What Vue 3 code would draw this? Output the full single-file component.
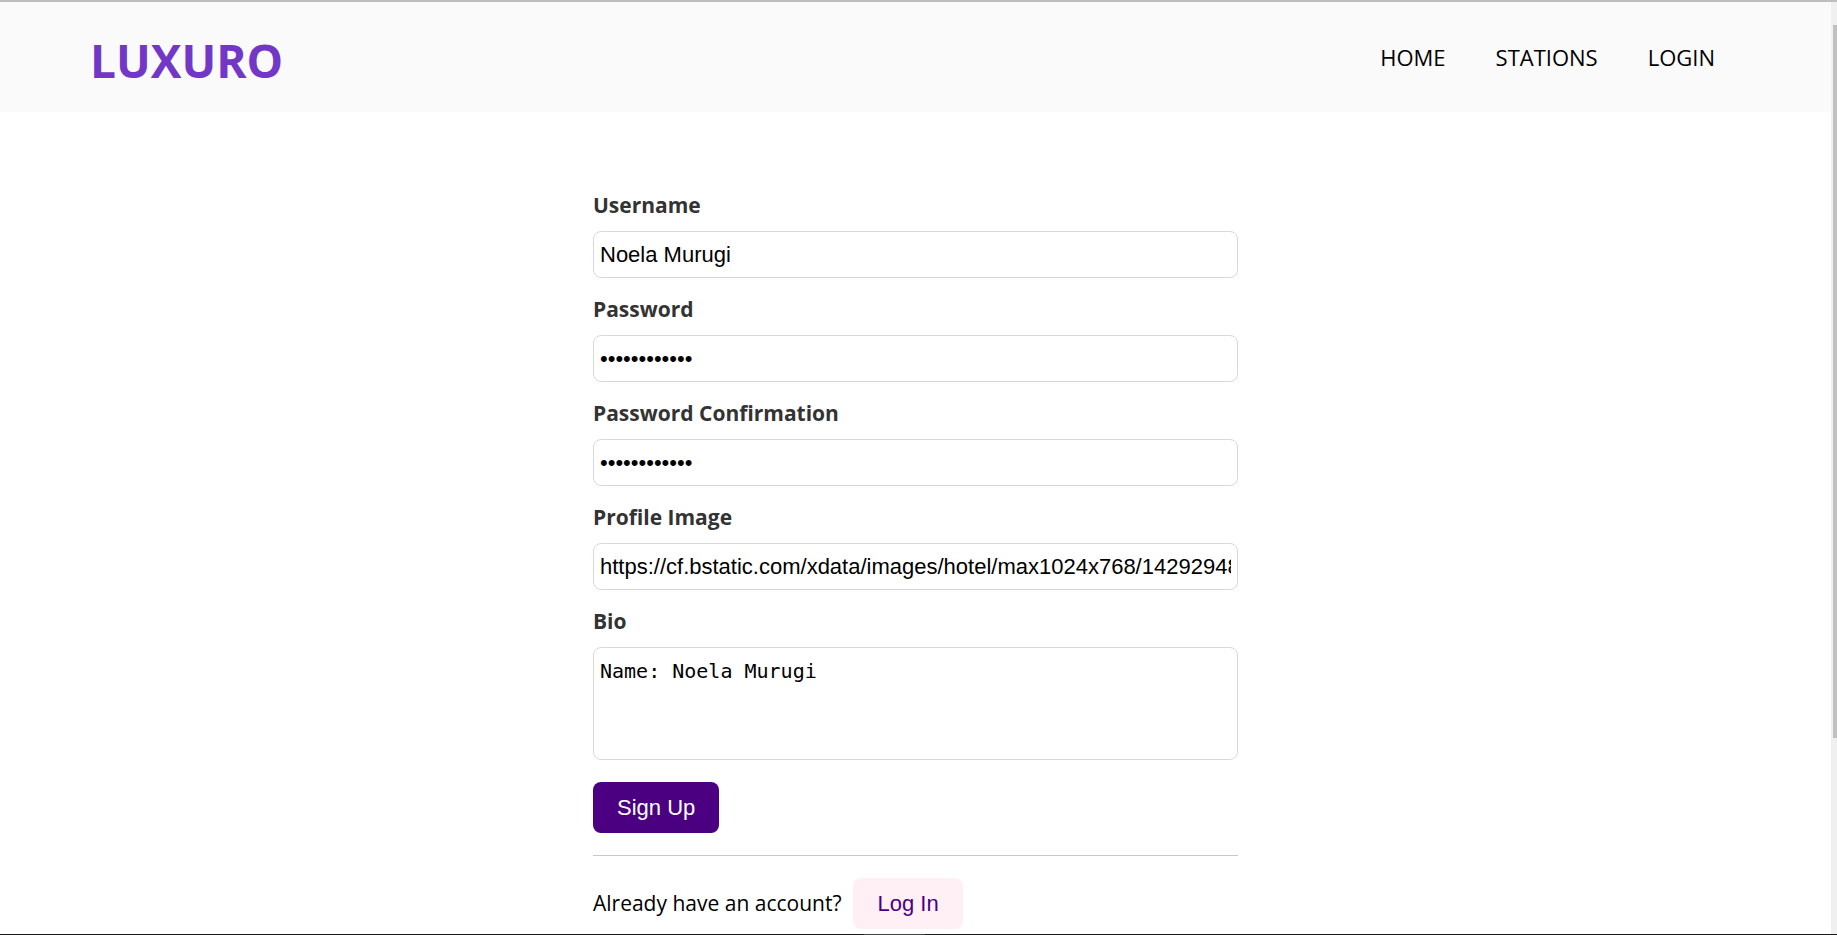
<script setup>
import { ref } from 'vue'

const links = ['HOME', 'STATIONS', 'LOGIN']
const fields = ref([
  { id: 'username', label: 'Username', type: 'text', value: 'Noela Murugi' },
  { id: 'password', label: 'Password', type: 'password', value: 'noelamurugi1' },
  { id: 'confirmation', label: 'Password Confirmation', type: 'password', value: 'noelamurugi1' },
  {
    id: 'image',
    label: 'Profile Image',
    type: 'text',
    value: 'https://cf.bstatic.com/xdata/images/hotel/max1024x768/142929488.jpg',
  },
])
const bio = ref('Name: Noela Murugi')
</script>

<template>
  <div class="screen">
    <div class="page">
      <header class="header">
        <h1 class="logo">LUXURO</h1>
        <nav class="nav">
          <a v-for="link in links" :key="link" href="#">{{ link }}</a>
        </nav>
      </header>
      <main class="main">
        <form class="form" @submit.prevent>
          <div v-for="f in fields" :key="f.id" class="field">
            <label :for="f.id">{{ f.label }}</label>
            <input :id="f.id" v-model="f.value" :type="f.type" autocomplete="off" spellcheck="false" />
          </div>
          <div class="field">
            <label for="bio">Bio</label>
            <textarea id="bio" v-model="bio" spellcheck="false"></textarea>
          </div>
          <button class="btn primary" type="submit">Sign Up</button>
          <hr class="divider" />
          <p class="login">
            <span>Already have an account?</span>
            <button class="btn secondary" type="button">Log In</button>
          </p>
        </form>
      </main>
    </div>
    <div class="track"><div class="thumb"></div></div>
    <div class="taskbar"><div class="active"></div></div>
  </div>
</template>

<style>
body {
  margin: 0;
  background: #fff;
}
</style>

<style scoped>
.screen {
  box-sizing: border-box;
  height: 100vh;
  display: grid;
  grid-template-columns: 1fr 6px;
  grid-template-rows: 1fr 1px;
  border-top: 2px solid #bebebe;
  overflow: hidden;
  font-family: "Open Sans", "Noto Sans", sans-serif;
  font-size: 21px;
  line-height: 32px;
  color: #000;
}
.page {
  min-height: 0;
  overflow: hidden;
}
.header {
  display: flex;
  align-items: center;
  justify-content: space-between;
  padding: 23px 116px 23px 90px;
  background: #fafafa;
}
.logo {
  margin: 0;
  padding-top: 6px;
  font-size: 46px;
  line-height: 58px;
  font-weight: 700;
  color: #7337c8;
}
.nav {
  display: flex;
  gap: 50px;
  font-size: 22px;
}
.nav a {
  color: #000;
  text-decoration: none;
}
.main {
  padding: 77px 24px 0;
}
.form {
  max-width: 645px;
  margin: 0 auto;
}
.field {
  display: flex;
  flex-direction: column;
  gap: 10px;
  margin-bottom: 15px;
}
label {
  font-weight: 700;
  color: #333;
}
input,
textarea {
  box-sizing: border-box;
  width: 100%;
  border: 1px solid #d9d9d9;
  border-radius: 8px;
  background: #fff;
  color: #000;
  outline: none;
}
input {
  height: 47px;
  padding: 6px;
  font-family: "Liberation Sans", Arial, sans-serif;
  font-size: 22px;
}
textarea {
  height: 113px;
  padding: 10px 6px;
  font-family: "DejaVu Sans Mono", monospace;
  font-size: 20px;
  line-height: 26px;
  resize: none;
}
.btn {
  height: 51px;
  padding: 0 24px;
  border: 0;
  border-radius: 8px;
  font-family: "Liberation Sans", Arial, sans-serif;
  font-size: 22px;
}
.primary {
  display: block;
  margin-top: 22px;
  background: #4b0082;
  color: #fff;
}
.secondary {
  background: #fff0f5;
  color: #4b0082;
}
.divider {
  height: 1px;
  margin: 22px 0;
  border: 0;
  background: #c8c8c8;
}
.login {
  display: flex;
  align-items: baseline;
  gap: 12px;
  margin: 0;
}
.track {
  display: flex;
  padding: 23px 0 0 2px;
  background: #f0f0f0;
}
.thumb {
  width: 100%;
  height: 78.4%;
  background: #c0c0c0;
}
.taskbar {
  grid-column: 1 / -1;
  display: flex;
  justify-content: center;
  padding-right: 48px;
  background: #1a1a1a;
}
.active {
  width: 61px;
  background: #444;
}
</style>
